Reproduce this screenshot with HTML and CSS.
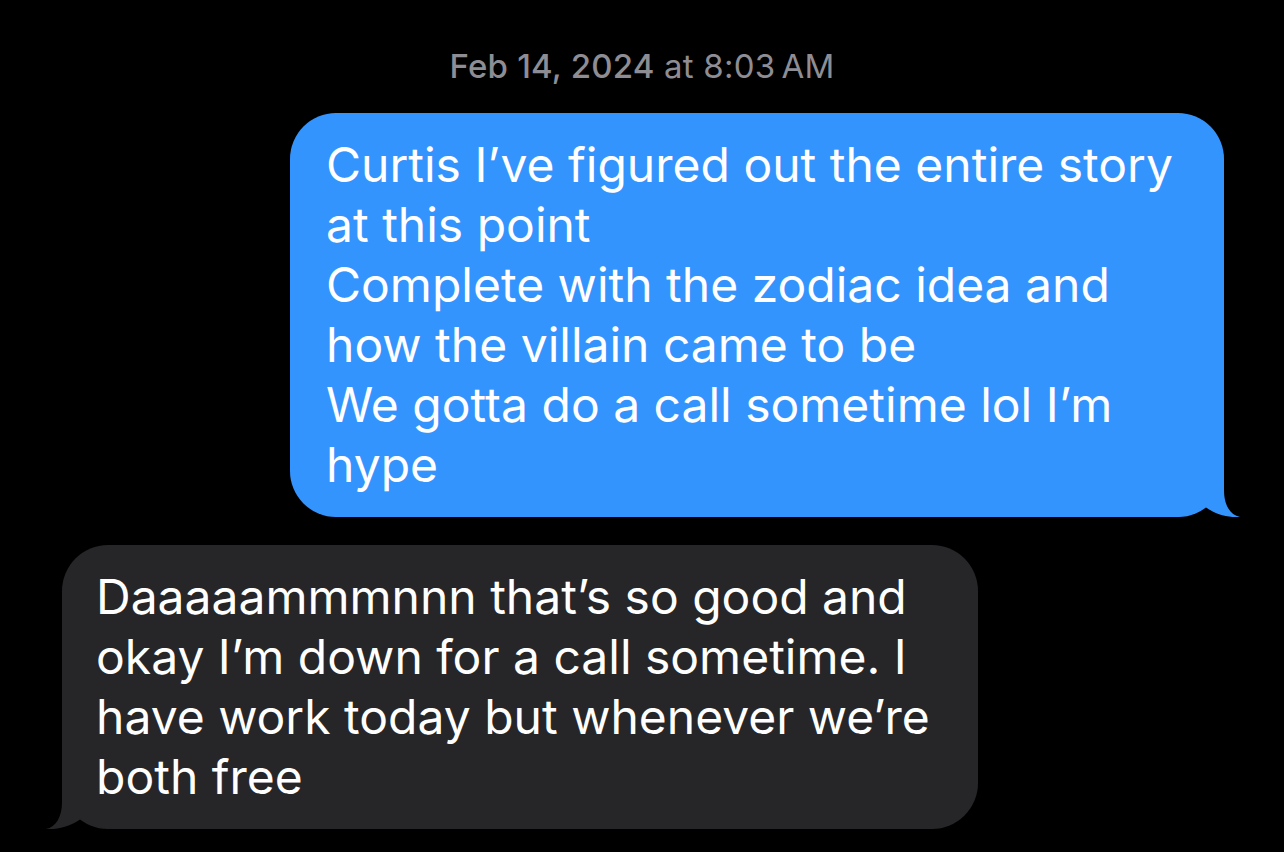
FILE: index.html
```html
<!DOCTYPE html>
<html>
<head>
<meta charset="utf-8">
<link rel="stylesheet" href="styles.css">
</head>
<body>
<div class="thread">
  <div class="stamp"><span class="stamp-date">Feb 14, 2024</span> at 8:03&#8201;AM</div>
  <div class="bubble sent">
    <svg class="tail tail-right" width="74" height="47" viewBox="0 0 74 47"><path d="M0 0 H54 V20 C54 35 60 45 70 47 C58 48 44 44 34 36 C25 43 15 47 0 47 Z"/></svg>
    <p class="text">Curtis I’ve figured out the entire story<br>at this point<br>Complete with the zodiac idea and<br>how the villain came to be<br>We gotta do a call sometime lol I’m<br>hype</p>
  </div>
  <div class="bubble received">
    <svg class="tail tail-left" width="74" height="47" viewBox="0 0 74 47"><path d="M0 0 H54 V20 C54 35 60 45 70 47 C58 48 44 44 34 36 C25 43 15 47 0 47 Z"/></svg>
    <p class="text">Daaaaammmnnn that’s so good and<br>okay I’m down for a call sometime. I<br>have work today but whenever we’re<br>both free</p>
  </div>
</div>
</body>
</html>
```
FILE: styles.css
```css
html, body {
  margin: 0;
  padding: 0;
  background: #000;
  width: 1284px;
  height: 852px;
  overflow: hidden;
}
.thread {
  display: flex;
  flex-direction: column;
  font-family: Inter, "Noto Sans", "Liberation Sans", sans-serif;
}
.stamp {
  align-self: center;
  margin-top: 46px;
  font-size: 33px;
  line-height: 40px;
  color: #8d8d93;
  letter-spacing: 0.2px;
}
.stamp-date {
  font-weight: 500;
}
.bubble {
  position: relative;
  box-sizing: border-box;
  border-radius: 46px;
  padding: 22px 0;
}
.text {
  position: relative;
  margin: 0;
  font-size: 48px;
  line-height: 60px;
  color: #fff;
  white-space: nowrap;
  letter-spacing: 0;
}
.sent {
  align-self: flex-end;
  margin-top: 27px;
  margin-right: 60px;
  width: 934px;
  background: #3494fe;
  padding-left: 36px;
}
.sent .tail { fill: #3494fe; }
.received {
  align-self: flex-start;
  margin-top: 28px;
  margin-left: 62px;
  width: 916px;
  background: #262629;
  padding-left: 34px;
}
.received .tail { fill: #262629; }
.tail {
  position: absolute;
  bottom: 0;
  display: block;
}
.tail-right {
  right: -20px;
}
.tail-left {
  left: -20px;
  transform: scaleX(-1);
}
```
